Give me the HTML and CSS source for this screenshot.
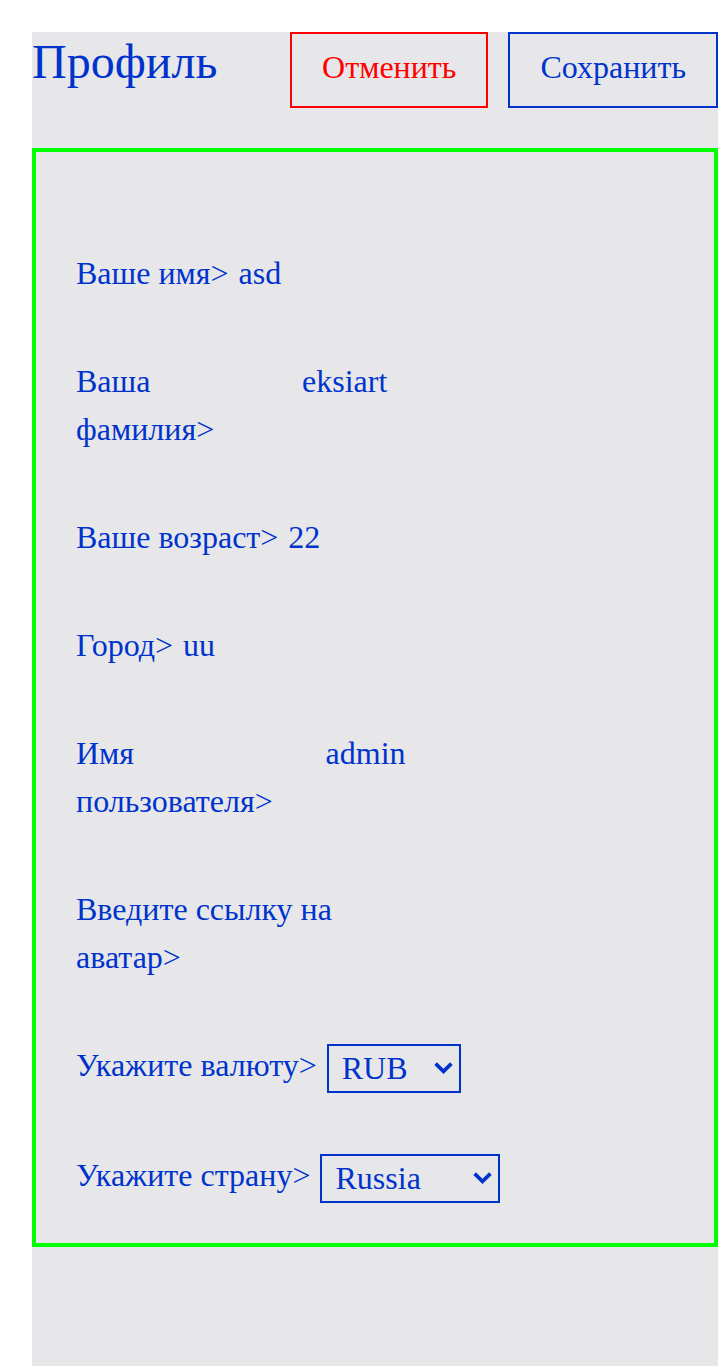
FILE: index.html
```html
<!DOCTYPE html>
<html lang="ru">
<head>
<meta charset="utf-8">
<title>Профиль</title>
<link rel="stylesheet" href="styles.css">
</head>
<body>
<div class="page">
  <header class="header">
    <h1 class="title">Профиль</h1>
    <div class="actions">
      <button class="btn btn--cancel" type="button">Отменить</button>
      <button class="btn btn--save" type="button">Сохранить</button>
    </div>
  </header>
  <section class="card">
    <div class="form">
      <div class="row"><span class="label">Ваше имя&gt;</span><span class="value">asd</span></div>
      <div class="row"><span class="label">Ваша фамилия&gt;</span><span class="value">eksiart</span></div>
      <div class="row"><span class="label">Ваше возраст&gt;</span><span class="value">22</span></div>
      <div class="row"><span class="label">Город&gt;</span><span class="value">uu</span></div>
      <div class="row"><span class="label">Имя пользователя&gt;</span><span class="value">admin</span></div>
      <div class="row"><span class="label">Введите ссылку на аватар&gt;</span><span class="value"></span></div>
      <div class="row row--select"><span class="label">Укажите валюту&gt;</span>
        <span class="select-wrap select-wrap--currency">
          <select class="select">
            <option>RUB</option>
            <option>USD</option>
            <option>EUR</option>
          </select>
          <svg class="chevron" viewBox="0 0 19 12" width="19" height="12" aria-hidden="true"><path d="M0.3 2.9 L2.9 0.3 L9.5 6.8 L16.1 0.3 L18.7 2.9 L9.5 12 Z" fill="currentColor"/></svg>
        </span>
      </div>
      <div class="row row--select"><span class="label">Укажите страну&gt;</span>
        <span class="select-wrap select-wrap--country">
          <select class="select">
            <option>Russia</option>
            <option>USA</option>
          </select>
          <svg class="chevron" viewBox="0 0 19 12" width="19" height="12" aria-hidden="true"><path d="M0.3 2.9 L2.9 0.3 L9.5 6.8 L16.1 0.3 L18.7 2.9 L9.5 12 Z" fill="currentColor"/></svg>
        </span>
      </div>
    </div>
  </section>
</div>
</body>
</html>
```

FILE: styles.css
```css
html, body {
  margin: 0;
  padding: 0;
  background: #ffffff;
}

body {
  font-family: "Liberation Serif", "Times New Roman", serif;
  color: #0033cc;
}

.page {
  margin: 32px 0 0 32px;
  background: #e7e7ea;
  min-height: calc(100vh - 32px);
}

.header {
  display: flex;
  justify-content: space-between;
  align-items: flex-start;
  margin-bottom: 40px;
}

.title {
  margin: 2px 0 0;
  font-size: 48px;
  font-weight: normal;
  line-height: normal;
  color: #0033cc;
}

.actions {
  display: flex;
  gap: 20px;
}

.btn {
  box-sizing: border-box;
  height: 76px;
  padding: 0 30px 5px;
  background: transparent;
  font-family: "Liberation Serif", "Times New Roman", serif;
  font-size: 32px;
  line-height: normal;
  border-radius: 0;
  cursor: pointer;
}

.btn--cancel {
  color: #ff0000;
  border: 2px solid #ff0000;
}

.btn--save {
  color: #0033cc;
  border: 2px solid #0033cc;
}

.card {
  border: 4px solid #00ff00;
  padding: 97px 0 42px 40px;
}

.form {
  width: 566px;
  display: flex;
  flex-direction: column;
  gap: 60px;
}

.row {
  display: flex;
  align-items: baseline;
  gap: 10px;
  font-size: 32px;
  line-height: 48px;
}

.row--select {
  align-items: flex-start;
}

.label {
  flex: 0 1 auto;
}

.value {
  flex: 0 1 347px;
  min-width: 0;
}

.select-wrap {
  position: relative;
  flex: 0 0 auto;
  display: block;
  margin: 3px 0 -2px;
  color: #0033cc;
}

.select-wrap--currency {
  width: 134px;
}

.select-wrap--country {
  width: 180px;
}

.select {
  display: block;
  box-sizing: border-box;
  width: 100%;
  height: 49px;
  margin: 0;
  padding: 0 36px 2px 13px;
  font-family: "Liberation Serif", "Times New Roman", serif;
  font-size: 32px;
  line-height: normal;
  color: #0033cc;
  background-color: transparent;
  border: 2px solid #0033cc;
  border-radius: 0;
  -webkit-appearance: none;
  appearance: none;
}

.chevron {
  position: absolute;
  right: 8px;
  top: 18px;
  pointer-events: none;
}
```
